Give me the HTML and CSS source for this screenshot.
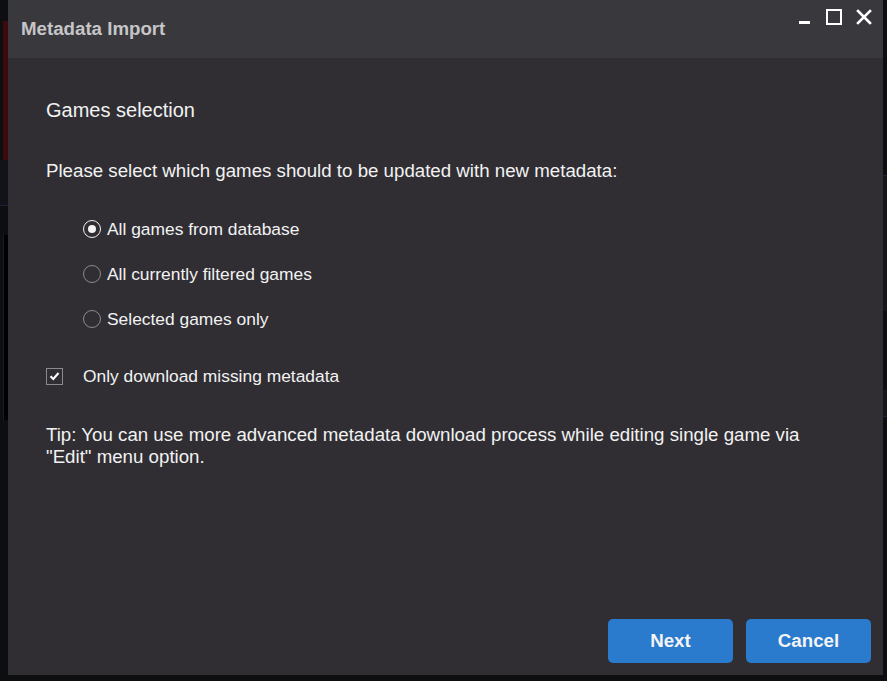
FILE: index.html
```html
<!DOCTYPE html>
<html>
<head>
<meta charset="utf-8">
<link rel="stylesheet" href="styles.css">
</head>
<body>
<div class="desktop">
  <div class="bg-red"></div>
  <div class="bg-card"></div>
  <div class="bg-card2"></div>
  <div class="bg-right1"></div>
  <div class="bg-right2"></div>
  <div class="dialog">
    <div class="titlebar">
      <div class="title">Metadata Import</div>
      <div class="controls">
        <svg class="ctl" width="14" height="16" viewBox="0 0 14 16"><rect x="1" y="12" width="11" height="3" fill="#fff"/></svg>
        <svg class="ctl" width="16" height="16" viewBox="0 0 16 16"><rect x="1" y="1" width="14" height="14" fill="none" stroke="#fff" stroke-width="2"/></svg>
        <svg class="ctl" width="16" height="16" viewBox="0 0 16 16"><path d="M2 2L14 14M14 2L2 14" stroke="#fff" stroke-width="2.6" stroke-linecap="square"/></svg>
      </div>
    </div>
    <div class="content">
      <div class="heading">Games selection</div>
      <div class="prompt">Please select which games should to be updated with new metadata:</div>
      <div class="radios">
        <div class="radio-row"><span class="radio checked"></span><span>All games from database</span></div>
        <div class="radio-row"><span class="radio"></span><span>All currently filtered games</span></div>
        <div class="radio-row"><span class="radio"></span><span>Selected games only</span></div>
      </div>
      <div class="check-row">
        <span class="checkbox"><svg width="11" height="10" viewBox="0 0 11 10"><path d="M1.5 5.2L4.3 8L9.5 2" fill="none" stroke="#fff" stroke-width="2"/></svg></span>
        <span>Only download missing metadata</span>
      </div>
      <div class="tip">Tip: You can use more advanced metadata download process while editing single game via<br>"Edit" menu option.</div>
      <div class="spacer"></div>
      <div class="buttons">
        <button class="btn">Next</button>
        <button class="btn">Cancel</button>
      </div>
    </div>
  </div>
</div>
</body>
</html>
```
FILE: styles.css
```css
html, body {
  margin: 0;
  padding: 0;
  background: #0d0e10;
  width: 887px;
  height: 681px;
  overflow: hidden;
}
.desktop {
  position: relative;
  width: 887px;
  height: 681px;
  padding-left: 8px;
  box-sizing: border-box;
  font-family: "Liberation Sans", Arial, sans-serif;
}
.bg-red {
  position: absolute;
  left: 3px;
  top: 21px;
  width: 5px;
  height: 150px;
  background: #3c0a0c;
}
.bg-card {
  position: absolute;
  left: 0;
  top: 160px;
  width: 8px;
  height: 45px;
  border-bottom: 1px solid #1a2140;
  background: #111318;
}
.bg-card2 {
  position: absolute;
  left: 3px;
  top: 235px;
  width: 5px;
  height: 185px;
  background: #000;
  border-left: 1px solid #161a2c;
}
.bg-right1 {
  position: absolute;
  left: 883px;
  top: 175px;
  width: 4px;
  height: 135px;
  background: #17171b;
  border-top: 1px solid #1b2244;
}
.bg-right2 {
  position: absolute;
  left: 883px;
  top: 390px;
  width: 4px;
  height: 26px;
  background: #17171b;
  border-bottom: 1px solid #1b2244;
}
.dialog {
  position: relative;
  width: 875px;
  height: 675px;
  background: #302e33;
  display: flex;
  flex-direction: column;
}
.titlebar {
  height: 58px;
  background: #39383c;
  display: flex;
  align-items: flex-start;
  justify-content: space-between;
  flex-shrink: 0;
}
.title {
  color: #c6c6c8;
  font-weight: bold;
  font-size: 18.7px;
  margin: 18px 0 0 13px;
}
.controls {
  display: flex;
  gap: 14px;
  margin: 9px 11px 0 0;
}
.ctl { display: block; }
.content {
  flex: 1;
  display: flex;
  flex-direction: column;
  padding: 41px 12px 12px 38px;
  color: #f2f2f2;
  font-size: 18.7px;
}
.heading {
  font-size: 20px;
  line-height: 22px;
}
.prompt {
  margin-top: 39px;
  line-height: 22px;
}
.radios {
  margin-top: 36px;
  margin-left: 37px;
  display: flex;
  flex-direction: column;
  gap: 23px;
}
.radio-row, .check-row {
  display: flex;
  align-items: center;
  line-height: 22px;
  font-size: 17.4px;
}
.radio {
  width: 16px;
  height: 16px;
  border: 1px solid #8a8a8e;
  border-radius: 50%;
  margin-right: 6px;
  box-sizing: content-box;
  position: relative;
}
.radio.checked { border-color: #f0f0f0; }
.radio.checked::after {
  content: "";
  position: absolute;
  left: 4px;
  top: 4px;
  width: 8px;
  height: 8px;
  border-radius: 50%;
  background: #f4f4f4;
}
.check-row { margin-top: 35px; }
.checkbox {
  width: 15px;
  height: 15px;
  border: 1px solid #8a8a8e;
  margin-right: 20px;
  display: flex;
  align-items: center;
  justify-content: center;
}
.checkbox svg { display: block; }
.tip {
  margin-top: 37px;
  line-height: 22px;
}
.spacer { flex: 1; }
.buttons {
  display: flex;
  justify-content: flex-end;
  gap: 13px;
}
.btn {
  width: 125px;
  height: 44px;
  border: none;
  border-radius: 5px;
  background: #2a7bcd;
  color: #f4f4f4;
  font-family: "Liberation Sans", Arial, sans-serif;
  font-weight: bold;
  font-size: 18.7px;
}
```
